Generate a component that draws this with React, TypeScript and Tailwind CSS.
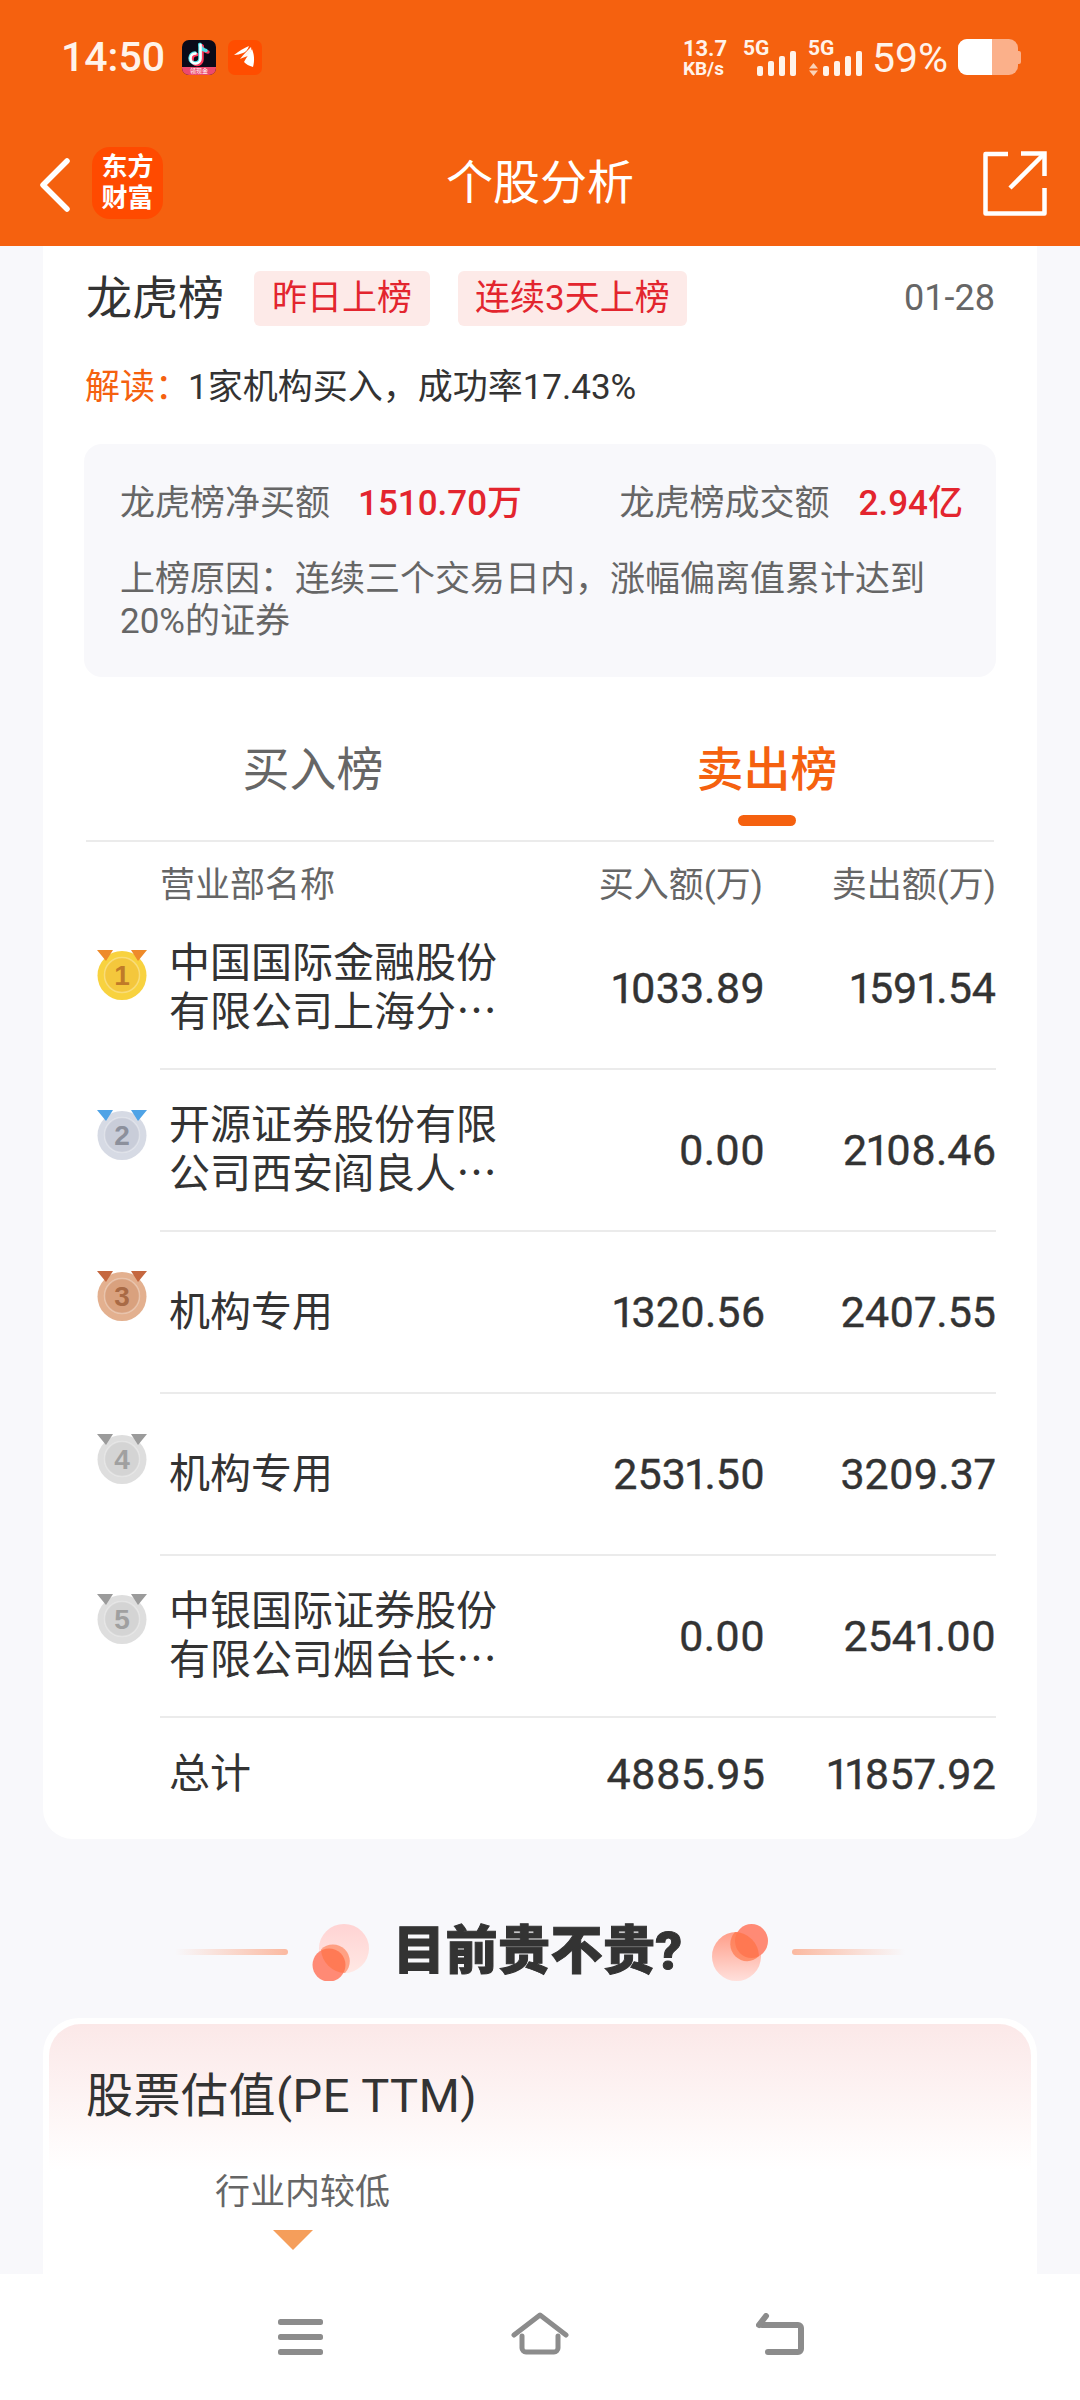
const rows = [
  { rank: 1, lines: ['中国国际金融股份', '有限公司上海分⋯'], buy: '1033.89', sell: '1591.54', top: 'pt-[42px]' },
  { rank: 2, lines: ['开源证券股份有限', '公司西安阎良人⋯'], buy: '0.00', sell: '2108.46', top: 'pt-[40px]' },
  { rank: 3, lines: ['机构专用'], buy: '1320.56', sell: '2407.55', top: 'pt-[39px]' },
  { rank: 4, lines: ['机构专用'], buy: '2531.50', sell: '3209.37', top: 'pt-[40px]' },
  { rank: 5, lines: ['中银国际证券股份', '有限公司烟台长⋯'], buy: '0.00', sell: '2541.00', top: 'pt-[38px]' },
];

const medalColors: Record<number, { ribbon: string; coin: string; inner: string; text: string }> = {
  1: { ribbon: '#ee8a2a', coin: '#f8d23f', inner: '#f4c73c', text: '#c07a28' },
  2: { ribbon: '#4fa3e6', coin: '#d6dae4', inner: '#c9cdd9', text: '#8c909c' },
  3: { ribbon: '#c5673f', coin: '#e3b08f', inner: '#d9a17e', text: '#a96a45' },
  4: { ribbon: '#9b9b9b', coin: '#dedede', inner: '#d4d4d4', text: '#a0a0a0' },
  5: { ribbon: '#9b9b9b', coin: '#dedede', inner: '#d4d4d4', text: '#a0a0a0' },
};

const numClass = 'text-right text-[43px] leading-[50px] proportional-nums [-webkit-text-stroke:0.4px_#333333]';

function Medal({ rank }: { rank: number }) {
  const c = medalColors[rank];
  return (
    <svg width="50" height="50" viewBox="0 0 50 50">
      <circle cx="25" cy="25.5" r="24.5" fill={c.coin} />
      <circle cx="25" cy="25" r="17.5" fill={c.inner} stroke="#ffffff" strokeOpacity="0.3" strokeWidth="1.5" />
      <path d="M0 0H16L9 11Z M50 0H34L41 11Z" fill={c.ribbon} />
      <text x="25" y="35" textAnchor="middle" fontSize="28" fontWeight="600" fontFamily="Liberation Sans" fill={c.text}>
        {rank}
      </text>
    </svg>
  );
}

function SignalBars() {
  return (
    <svg width="40" height="25" viewBox="0 0 40 25" fill="#fff3ea">
      <rect x="0" y="15" width="6" height="10" rx="2" />
      <rect x="11" y="10" width="6" height="15" rx="2" />
      <rect x="22" y="5" width="6" height="20" rx="2" />
      <rect x="33" y="0" width="6" height="25" rx="2" />
    </svg>
  );
}

function StatusBar() {
  return (
    <div className="flex h-[114px] items-start justify-between pl-[61px] pr-[59px] pt-[39px] text-[#fff3ea]">
      <div className="flex items-center">
        <span className="text-[41px] leading-[36px] font-medium">14:50</span>
        <div className="ml-[17px] flex h-[35px] w-[34px] flex-col overflow-hidden rounded-[7px] bg-[#0a0a18]">
          <svg width="34" height="27" viewBox="0 0 34 27" fill="none" strokeWidth="3.5" strokeLinecap="round">
            <path d="M19 5V18.5a5 5 0 1 1-5-5" stroke="#ff3a5c" transform="translate(1 1)" />
            <path d="M19 5c.5 3.5 3 5.5 6 6" stroke="#ff3a5c" transform="translate(1 1)" />
            <path d="M19 5V18.5a5 5 0 1 1-5-5" stroke="#4fe0e6" transform="translate(-1 -0.5)" />
            <path d="M19 5c.5 3.5 3 5.5 6 6" stroke="#4fe0e6" transform="translate(-1 -0.5)" />
            <path d="M18.5 5V18.5a5 5 0 1 1-5-5" stroke="#ffffff" strokeWidth="2.5" />
          </svg>
          <div className="flex h-[8px] items-center justify-center bg-[#ec4a6e] text-[6px] leading-[8px] text-white">领现金</div>
        </div>
        <div className="ml-[12px] flex h-[35px] w-[34px] items-center justify-center rounded-[7px] bg-[#ff4d00]">
          <svg width="26" height="26" viewBox="0 0 26 26" fill="#ffffff">
            <path d="M2 11C7 7 12 4 17 2c-1 3-3 6-6 7-3 1-6 2-9 2Z" />
            <path d="M8 15c3-4 7-8 11-12 1 3-1 7-3 9-3 1-6 2-8 3Z" opacity="0.95" />
            <path d="M12 18c2-4 5-8 8-13 2 5 3 11 1 18-4-1-7-3-9-5Z" />
          </svg>
        </div>
      </div>

      <div className="flex items-start">
        <div className="w-[44px] text-[22px] leading-[19px] font-bold">
          <div>13.7</div>
          <div className="mt-[2px] text-[19px] leading-[17px]">KB/s</div>
        </div>
        <div className="relative ml-[30px] h-[37px] w-[40px]">
          <span className="absolute -left-[14px] top-0 text-[21px] leading-[18px] font-bold">5G</span>
          <div className="absolute bottom-0 left-0 flex"><SignalBars /></div>
        </div>
        <div className="relative ml-[11px] h-[37px] w-[54px]">
          <span className="absolute left-0 top-0 text-[21px] leading-[18px] font-bold">5G</span>
          <svg className="absolute bottom-0 left-[1px]" width="9" height="13" viewBox="0 0 9 13" fill="#fbd3b8">
            <path d="M4.5 0L9 5.5H0Z M4.5 13L0 7.5H9Z" />
          </svg>
          <div className="absolute bottom-0 left-[15px] flex"><SignalBars /></div>
        </div>
        <span className="ml-[10px] text-[41px] leading-[38px]">59%</span>
        <div className="ml-[10px] flex items-center">
          <div className="flex h-[36px] w-[60px] overflow-hidden rounded-[9px] bg-[#fbb08a]">
            <div className="h-full w-[34px] bg-white" />
          </div>
          <div className="h-[13px] w-[3px] rounded-r-[2px] bg-[#fbb08a]" />
        </div>
      </div>
    </div>
  );
}

function NavBar() {
  return (
    <div className="grid h-[132px] grid-cols-[1fr_auto_1fr] items-start px-[33px] pt-[33px] text-white">
      <div className="flex items-start pl-[7px]">
        <svg className="mt-[11px]" width="30" height="54" viewBox="0 0 30 54" fill="none" stroke="#ffffff" strokeWidth="5.5" strokeLinecap="round" strokeLinejoin="round">
          <path d="M27 3L3 27L27 51" />
        </svg>
        <div className="ml-[22px] flex h-[72px] w-[71px] flex-col items-center justify-center rounded-[18px] bg-[#ff4a00] text-[26px] leading-[31px] font-bold">
          <span>东方</span>
          <span>财富</span>
        </div>
      </div>
      <span className="mt-[8px] text-[47px] leading-[56px]">个股分析</span>
      <div className="flex justify-end">
        <svg className="mt-[4px]" width="64" height="65" viewBox="0 0 64 65" fill="none" stroke="#ffffff" strokeWidth="4.5">
          <path d="M25 3H2.5V62.5H61.5V37" strokeLinejoin="round" />
          <path d="M38 2.5H61.5V25" />
          <path d="M27 37L60 4" />
        </svg>
      </div>
    </div>
  );
}

function StatBox() {
  return (
    <div className="mx-[41px] mt-[32px] rounded-[18px] bg-[#f8f8fb] pl-[36px] pr-[33px] pt-[36px] pb-[34px] text-[35px] text-[#666666]">
      <div className="flex justify-between leading-[48px]">
        <div className="flex">
          <span>龙虎榜净买额</span>
          <span className="ml-[28px] font-medium text-[#e3252e]">1510.70万</span>
        </div>
        <div className="flex">
          <span>龙虎榜成交额</span>
          <span className="ml-[29px] font-medium text-[#e3252e]">2.94亿</span>
        </div>
      </div>
      <p className="mt-[31px] leading-[42px]">上榜原因：连续三个交易日内，涨幅偏离值累计达到20%的证券</p>
    </div>
  );
}

function RankTable() {
  return (
    <div className="pl-[43px] pr-[41px]">
      <div className="flex h-[66px] pt-[20px] text-[35px] leading-[48px] text-[#666666]">
        <span className="ml-[74px] flex-1">营业部名称</span>
        <span className="w-[200px] text-right">买入额(万)</span>
        <span className="w-[233px] text-right">卖出额(万)</span>
      </div>
      {rows.map((r) => (
        <div key={r.rank} className="flex h-[162px]">
          <div className={`w-[74px] pl-[11px] ${r.top}`}>
            <Medal rank={r.rank} />
          </div>
          <div className="flex flex-1 items-center border-b-2 border-[#ebebeb] text-[#333333]">
            <div className="flex-1 pl-[9px] text-[41px] leading-[49px]">
              {r.lines.map((line) => (
                <div key={line}>{line}</div>
              ))}
            </div>
            <span className={`w-[200px] ${numClass}`}>{r.buy}</span>
            <span className={`w-[231px] ${numClass}`}>{r.sell}</span>
          </div>
        </div>
      ))}
      <div className="flex h-[121px] items-start pl-[83px] pt-[31px] text-[#333333]">
        <span className="flex-1 text-[41px] leading-[50px]">总计</span>
        <span className={`w-[200px] ${numClass}`}>4885.95</span>
        <span className={`w-[231px] ${numClass}`}>11857.92</span>
      </div>
    </div>
  );
}

function SectionTitle() {
  return (
    <div className="flex h-[64px] items-center">
      <div className="ml-[175px] h-[6px] w-[113px] rounded-r-full bg-gradient-to-r from-[#fbb9a000] to-[#fbb9a0]" />
      <svg className="ml-[24px]" width="57" height="57" viewBox="0 0 57 57">
        <defs>
          <linearGradient id="blobA" x1="0" y1="0" x2="0" y2="1">
            <stop offset="0" stopColor="#ffd3d3" />
            <stop offset="1" stopColor="#ffe8e4" />
          </linearGradient>
        </defs>
        <ellipse cx="32" cy="24.5" rx="25" ry="24.5" fill="url(#blobA)" />
        <ellipse cx="17" cy="41" rx="16.5" ry="16.5" fill="#ff8a75" />
        <path d="M9 25.5a25 24.5 0 0 0 24 23.5a16.5 16.5 0 0 0-24-23.5Z" fill="#ff6d3a" opacity="0.55" />
      </svg>
      <span className="ml-[24px] w-[289px] text-[52px] leading-[60px] font-black tracking-[0.5px] whitespace-nowrap text-[#333333] [-webkit-text-stroke:1px_#333333]">
        目前贵不贵?
      </span>
      <svg className="ml-[30px]" width="56" height="57" viewBox="0 0 56 57">
        <defs>
          <linearGradient id="blobB" x1="0" y1="0" x2="0" y2="1">
            <stop offset="0" stopColor="#ff9d88" />
            <stop offset="1" stopColor="#ffe0dc" />
          </linearGradient>
        </defs>
        <ellipse cx="24.5" cy="32.5" rx="24.5" ry="24.5" fill="url(#blobB)" />
        <ellipse cx="39.5" cy="17" rx="16.5" ry="17" fill="#ff8a75" />
        <path d="M23 8a16.5 17 0 0 0 24 24a24.5 24.5 0 0 0-24-24Z" fill="#ff6d3a" opacity="0.6" />
      </svg>
      <div className="ml-[24px] h-[6px] w-[113px] rounded-l-full bg-gradient-to-l from-[#fbb9a000] to-[#fbb9a0]" />
    </div>
  );
}

function BottomBar() {
  return (
    <div className="flex h-[126px] justify-center bg-white">
      <div className="flex w-[240px] justify-center pt-[45px]">
        <svg width="45" height="36" viewBox="0 0 45 36" fill="#8c8c8c">
          <rect y="0" width="45" height="6" rx="2.5" />
          <rect y="15" width="45" height="6" rx="2.5" />
          <rect y="30" width="45" height="6" rx="2.5" />
        </svg>
      </div>
      <div className="flex w-[240px] justify-center pt-[38px]">
        <svg width="58" height="43" viewBox="0 0 58 43" fill="none" stroke="#8c8c8c" strokeWidth="5" strokeLinejoin="round" strokeLinecap="round">
          <path d="M3 23L29 3L55 23" />
          <path d="M11 24V36a4 4 0 0 0 4 4H43a4 4 0 0 0 4-4V24" />
        </svg>
      </div>
      <div className="flex w-[240px] justify-center pt-[39px]">
        <svg width="48" height="42" viewBox="0 0 48 42" fill="none" stroke="#8c8c8c" strokeWidth="6" strokeLinecap="round" strokeLinejoin="round">
          <path d="M12 39H42a3 3 0 0 0 3-3V15a3 3 0 0 0-3-3H6" />
          <path d="M10 3L3 12" />
        </svg>
      </div>
    </div>
  );
}

export default function App() {
  return (
    <div className="flex h-[2400px] w-[1080px] flex-col overflow-hidden bg-[#f8f8fb] font-[Roboto,'Noto_Sans_CJK_SC',sans-serif]">
      <div className="bg-[#f5610f]">
        <StatusBar />
        <NavBar />
      </div>

      <div className="flex-1 overflow-hidden">
        {/* 龙虎榜 card */}
        <div className="mx-[43px] rounded-b-[30px] bg-white pt-[25px]">
          <div className="flex h-[55px] items-center pl-[43px] pr-[42px]">
            <span className="text-[46px] leading-[55px] text-[#333333]">龙虎榜</span>
            <span className="ml-[30px] rounded-[6px] bg-[#fdeae8] px-[18px] text-[35px] leading-[55px] text-[#e3252e]">昨日上榜</span>
            <span className="ml-[28px] rounded-[6px] bg-[#fdeae8] px-[17px] text-[35px] leading-[55px] text-[#e3252e]">连续3天上榜</span>
            <span className="ml-auto text-[36px] leading-[55px] text-[#666666]">01-28</span>
          </div>
          <p className="mt-[38px] pl-[42px] text-[35px] leading-[48px] text-[#333333]">
            <span className="mr-[-2px] text-[#f5610f]">解读：</span>1家机构买入，成功率17.43%
          </p>
          <StatBox />

          <div className="mx-[43px] mt-[63px] flex border-b-2 border-[#ebebeb] pb-[14px]">
            <div className="flex w-[455px] flex-col items-center">
              <span className="text-[47px] leading-[60px] text-[#666666]">买入榜</span>
            </div>
            <div className="flex w-[455px] flex-col items-center">
              <span className="text-[47px] leading-[60px] font-medium text-[#f5610f]">卖出榜</span>
              <div className="mt-[15px] h-[11px] w-[58px] rounded-full bg-[#f5610f]" />
            </div>
          </div>
          <RankTable />
        </div>

        <div className="mt-[81px]">
          <SectionTitle />
        </div>

        {/* 股票估值 card */}
        <div className="mx-[43px] mt-[34px] h-[300px] rounded-t-[36px] bg-white p-[6px]">
          <div className="h-[147px] rounded-t-[32px] bg-gradient-to-b from-[#fbe8e8] to-white pl-[37px] pt-[43px]">
            <h2 className="text-[47px] leading-[58px] font-normal tracking-[0.5px] text-[#333333]">股票估值(PE TTM)</h2>
          </div>
          <div className="pl-[166px] pt-[2px]">
            <span className="block text-[35px] leading-[40px] text-[#666666]">行业内较低</span>
            <svg className="ml-[58px] mt-[17px]" width="40" height="20" viewBox="0 0 40 20">
              <path d="M0 0H40L20 20Z" fill="#f59e5b" />
            </svg>
          </div>
        </div>
      </div>

      <BottomBar />
    </div>
  );
}
